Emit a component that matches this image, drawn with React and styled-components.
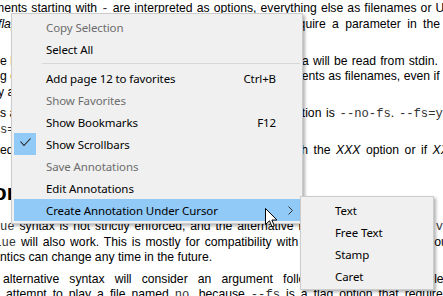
import React from "react";
import styled, { createGlobalStyle } from "styled-components";

const Global = createGlobalStyle`
  html, body { margin: 0; padding: 0; background: #fff; overflow: hidden; }
`;

const Viewport = styled.div`
  position: relative;
  width: 443px;
  height: 296px;
  overflow: hidden;
  background: #fff;
`;

const Doc = styled.div`
  padding-top: 1px;
  font-family: "Liberation Sans", Arial, sans-serif;
  font-size: 12.2px;
  line-height: 15.5px;
  color: #000;
`;

const Para = styled.div`
  margin: 0 0 6px;
`;

const Line = styled.div`
  display: flex;
  justify-content: space-between;
  height: 15.5px;
  white-space: nowrap;
  margin-left: ${(p) => p.$x}px;
  width: ${(p) => (p.$w ? `${p.$w}px` : "auto")};
`;

const Run = styled.span`
  word-spacing: ${(p) => p.$ws || 0}px;
`;

const Heading = styled.h2`
  margin: 5px 0 13px -129px;
  font-size: 22px;
  line-height: 26px;
  font-weight: bold;
  white-space: nowrap;
`;

const Code = styled.code`
  font-family: "Liberation Mono", "Courier New", monospace;
  font-size: 12.2px;
  color: #333;
`;

const Menu = styled.div`
  position: absolute;
  left: ${(p) => p.$x}px;
  top: ${(p) => p.$y}px;
  width: ${(p) => p.$w}px;
  box-sizing: border-box;
  padding: 2px;
  background: #f0f0f0;
  border: 1px solid #cccccc;
  box-shadow: 2px 2px 3px rgba(0, 0, 0, 0.3);
  font-family: "Segoe UI", "Noto Sans", sans-serif;
  font-size: 11.5px;
  letter-spacing: -0.1px;
`;

const Item = styled.div`
  display: grid;
  grid-template-columns: 22px 1fr auto 24px;
  align-items: center;
  height: 22px;
  background: ${(p) => (p.$hover ? "#91c9f7" : "transparent")};
  color: ${(p) => (p.$disabled ? "#6d6d6d" : "#000")};
  white-space: nowrap;
`;

const Gutter = styled.span`
  width: 22px;
  height: 22px;
  display: flex;
  align-items: center;
  justify-content: center;
  background: ${(p) => (p.$checked ? "#91c9f7" : "transparent")};
`;

const Label = styled.span`
  padding-left: 10px;
`;

const Shortcut = styled.span`
  text-align: right;
`;

const Arrow = styled.span`
  display: flex;
  justify-content: flex-end;
  padding-right: 7px;
`;

const Separator = styled.div`
  height: 7px;
  display: flex;
  align-items: center;
  padding-left: 28px;
  &::after {
    content: "";
    flex: 1;
    height: 1px;
    background: #d7d7d7;
  }
`;

const Cursor = styled.svg`
  position: absolute;
  left: 265px;
  top: 208px;
`;

const CheckIcon = () => (
  <svg width="22" height="22" viewBox="0 0 22 22">
    <path d="M6.5 8.5 L10 12.5 L16.5 5.5" fill="none" stroke="#222" strokeWidth="1.1" />
  </svg>
);

const Chevron = () => (
  <svg width="5" height="9" viewBox="0 0 5 9">
    <path d="M0.5 0.5 L4.5 4.5 L0.5 8.5" fill="none" stroke="#333" strokeWidth="1" />
  </svg>
);

const MenuItem = ({ label, shortcut, disabled, checked, hover, sub }) => (
  <Item $disabled={disabled} $hover={hover}>
    <Gutter $checked={checked}>{checked && <CheckIcon />}</Gutter>
    <Label>{label}</Label>
    <Shortcut>{shortcut}</Shortcut>
    <Arrow>{sub && <Chevron />}</Arrow>
  </Item>
);

export default function App() {
  return (
    <Viewport>
      <Global />
      <Doc>
        <Para>
          <Line $x={-30.4}>
            <Run $ws={0.73}>
              arguments starting with <Code>-</Code> are interpreted as options, everything else as
              filenames or URLs.
            </Run>
          </Line>
          <Line $x={-2} $w={442}>
            <Run>
              <em>flag</em> options (or choices including <Code>yes</Code>)
            </Run>
            <Run $ws={3}>require a parameter in the</Run>
          </Line>
          <Line $x={-112}>
            <Run>
              <Code>--option=value</Code>.
            </Run>
          </Line>
        </Para>
        <Para>
          <Line $x={-10.2} $w={448}>
            <Run>
              the lone <Code>-</Code> (without anything else), which means media
            </Run>
            <Run $ws={0.75}>data will be read from stdin.</Run>
          </Line>
          <Line $x={-39.3} $w={479}>
            <Run>anything else) will make the player interpret all following</Run>
            <Run $ws={0.1}>arguments as filenames, even if</Run>
          </Line>
          <Line $x={-18.3}>
            <Run>
              play a file named <Code>-</Code>, you need to use <Code>./-</Code>.)
            </Run>
          </Line>
        </Para>
        <Para>
          <Line $x={-13.6} $w={471}>
            <Run>
              has a <em>no-flag</em> counterpart, e.g. the opposite of the <Code>--fs</Code>
            </Run>
            <Run $ws={1.3}>
              option is <Code>--no-fs</Code>. <Code>--fs=yes</Code>
            </Run>
          </Line>
          <Line $x={-22}>
            <Run>
              <Code>--fs=no</Code> is the same as <Code>--no-fs</Code>.
            </Run>
          </Line>
        </Para>
        <Para>
          <Line $x={-27.1} $w={484}>
            <Run>
              marked as <em>(XXX only)</em>, it will only work in combination
            </Run>
            <Run $ws={2.1}>
              with the <em>XXX</em> option or if <em>XXX</em>
            </Run>
          </Line>
          <Line $x={-112}>
            <Run>is compiled in.</Run>
          </Line>
        </Para>
        <Heading>Legacy option syntax</Heading>
        <Para>
          <Line $x={-87.8} $w={560}>
            <Run $ws={1.5}>
              <Code>--option=value</Code> syntax is not strictly enforced, and the alternative legacy
              syntax
            </Run>
            <Run>
              <Code>-option value</Code>
            </Run>
          </Line>
          <Line $x={-87.8} $w={562}>
            <Run $ws={1.5}>
              <Code>--option value</Code> will also work. This is mostly for compatibility with
              MPlayer. Using these
            </Run>
            <Run>should be</Run>
          </Line>
          <Line $x={-29.8}>
            <Run>semantics can change any time in the future.</Run>
          </Line>
        </Para>
        <Para>
          <Line $x={3} $w={474.5}>
            <Run $ws={6.7}>alternative syntax will consider an argument following the option a</Run>
            <Run>filename.</Run>
          </Line>
          <Line $x={6}>
            <Run $ws={2.6}>
              attempt to play a file named <Code>no</Code>, because <Code>--fs</Code> is a flag option
              that requires no parameter.
            </Run>
          </Line>
        </Para>
      </Doc>

      <Menu $x={11} $y={13} $w={292}>
        <MenuItem label="Copy Selection" disabled />
        <MenuItem label="Select All" />
        <Separator />
        <MenuItem label="Add page 12 to favorites" shortcut="Ctrl+B" />
        <MenuItem label="Show Favorites" disabled />
        <MenuItem label="Show Bookmarks" shortcut="F12" />
        <MenuItem label="Show Scrollbars" checked />
        <MenuItem label="Save Annotations" disabled />
        <MenuItem label="Edit Annotations" />
        <MenuItem label="Create Annotation Under Cursor" hover sub />
      </Menu>

      <Menu $x={300} $y={196} $w={134}>
        <MenuItem label="Text" />
        <MenuItem label="Free Text" />
        <MenuItem label="Stamp" />
        <MenuItem label="Caret" />
      </Menu>

      <Cursor width="13" height="21" viewBox="0 0 13 21">
        <path
          d="M0.5 0.5 L0.5 16.5 L4.5 12.8 L7 18.8 L9.3 17.8 L6.9 12 L12 12 Z"
          fill="#fff"
          stroke="#000"
          strokeWidth="1"
        />
      </Cursor>
    </Viewport>
  );
}
